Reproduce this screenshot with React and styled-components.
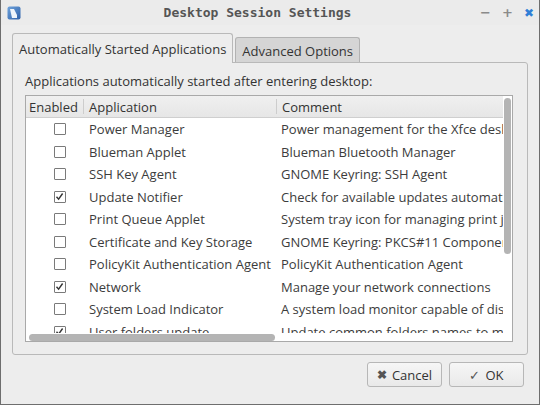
import React from 'react'
import styled, { createGlobalStyle } from 'styled-components'

const Global = createGlobalStyle`
  html, body { margin: 0; padding: 0; background: #ededed; }
  * { box-sizing: border-box; }
`

const Window = styled.div`
  width: 540px;
  height: 405px;
  background: #ededed;
  border: 1px solid #6e6e6e;
  border-top: none;
  display: flex;
  flex-direction: column;
  font-family: "Open Sans", "Noto Sans", sans-serif;
  font-size: 13px;
  color: #3c3c3c;
  overflow: hidden;
`

const TitleBar = styled.div`
  height: 25px;
  display: flex;
  align-items: center;
  padding: 0 5px 0 6px;
  background: #ebebeb;
`

const Title = styled.div`
  flex: 1;
  text-align: center;
  font-family: "DejaVu Sans Mono", monospace;
  font-weight: bold;
  font-size: 13px;
  color: #555;
  padding-left: 14px;
`

const Controls = styled.div`
  display: flex;
  gap: 12px;
  align-items: center;
`

const Ctl = styled.span`
  font-family: "DejaVu Sans", sans-serif;
  font-weight: bold;
  font-size: ${p => p.$size || 13}px;
  color: ${p => p.$color || '#8a8a8a'};
  width: 10px;
  text-align: center;
`

const Body = styled.div`
  flex: 1;
  display: flex;
  flex-direction: column;
  padding: 8px 11px 0 11px;
`

const Tabs = styled.div`
  display: flex;
  align-items: flex-end;
  height: 29px;
`

const Tab = styled.div`
  height: ${p => (p.$active ? 30 : 25)}px;
  padding: 0 6px;
  padding-top: ${p => (p.$active ? 0 : 2)}px;
  margin-right: 2px;
  display: flex;
  align-items: center;
  background: ${p => (p.$active ? '#ededed' : '#d5d5d5')};
  border: 1px solid ${p => (p.$active ? '#b9b9b9' : '#b2b2b2')};
  border-bottom: none;
  border-radius: 3px 3px 0 0;
  position: relative;
  z-index: ${p => (p.$active ? 2 : 1)};
  margin-bottom: ${p => (p.$active ? -1 : 0)}px;
  color: #333;
`

const Panel = styled.div`
  height: 293px;
  border: 1px solid #b9b9b9;
  border-radius: 0 3px 3px 3px;
  padding: 9px 14px 12px 12px;
  display: flex;
  flex-direction: column;
`

const Caption = styled.div`
  height: 20px;
  line-height: 18px;
  color: #333;
  margin-bottom: 3px;
`

const Frame = styled.div`
  flex: 1;
  border: 1px solid #a9a9a9;
  background: #fff;
  display: flex;
  overflow: hidden;
`

const Main = styled.div`
  flex: 1;
  display: flex;
  flex-direction: column;
  min-width: 0;
`

const Header = styled.div`
  height: 22px;
  display: flex;
  background: linear-gradient(#f0f0f0, #e6e6e6);
  border-bottom: 1px solid #cfcfcf;
  flex-shrink: 0;
`

const HeadCell = styled.div`
  width: ${p => (p.$w ? p.$w + 'px' : 'auto')};
  flex: ${p => (p.$w ? 'none' : 1)};
  padding-left: ${p => p.$pad || 5}px;
  display: flex;
  align-items: center;
  color: #333;
  border-left: ${p => (p.$sep ? '1px solid #cdcdcd' : 'none')};
  margin: ${p => (p.$sep ? '3px 0' : '0')};
  white-space: nowrap;
`

const Rows = styled.div`
  height: 215px;
  overflow: hidden;
  flex-shrink: 0;
`

const Row = styled.div`
  height: 22.5px;
  display: flex;
  align-items: center;
  white-space: nowrap;
`

const CheckCell = styled.div`
  width: 57px;
  flex: none;
  display: flex;
  justify-content: center;
  padding-left: 12px;
  padding-right: 2px;
`

const Box = styled.div`
  width: 12px;
  height: 12px;
  border: 1px solid #7a7a7a;
  border-radius: 1px;
  background: #fff;
  display: flex;
  align-items: center;
  justify-content: center;
`

const AppCell = styled.div`
  width: 193px;
  flex: none;
  padding-left: 6px;
  overflow: hidden;
`

const CommentCell = styled.div`
  flex: 1;
  padding-left: 5px;
  overflow: hidden;
`

const HScroll = styled.div`
  height: 9px;
  padding: 1px 0 1px 3px;
  flex-shrink: 0;
  background: #fff;
`

const HThumb = styled.div`
  width: 246px;
  height: 7px;
  border-radius: 4px;
  background: #b4b4b4;
`

const VScroll = styled.div`
  width: 9px;
  flex: none;
  padding: 2px 1px;
  background: #fff;
`

const VThumb = styled.div`
  height: 156px;
  border-radius: 4px;
  background: #b4b4b4;
`

const Footer = styled.div`
  display: flex;
  justify-content: flex-end;
  gap: 7px;
  padding: 7px 4px 0 0;
`

const Button = styled.button`
  width: 75px;
  height: 25px;
  border: 1px solid #b7b7b7;
  border-radius: 3px;
  background: linear-gradient(#f6f6f6, #e9e9e9);
  font-family: "Open Sans", "Noto Sans", sans-serif;
  font-size: 13px;
  color: #333;
  display: flex;
  align-items: center;
  justify-content: center;
  gap: 5px;
  padding: 0;
`

const BtnGlyph = styled.span`
  color: #555;
  font-weight: ${p => (p.$bold ? 'bold' : 'normal')};
  font-size: ${p => p.$size || 13}px;
`

const AppIcon = () => (
  <svg width="14" height="14" viewBox="0 0 14 14">
    <defs>
      <linearGradient id="ig" x1="0" y1="0" x2="1" y2="1">
        <stop offset="0" stopColor="#6fa3dc" />
        <stop offset="1" stopColor="#2d5fa8" />
      </linearGradient>
    </defs>
    <rect x="0.5" y="0.5" width="13" height="13" rx="2" fill="url(#ig)" />
    <path d="M3 3 L7 3 L10 9 L10 12 L5 12 Z" fill="#eef4fb" />
  </svg>
)

const Check = () => (
  <svg width="9" height="9" viewBox="0 0 9 9">
    <path d="M1.5 4.8 L3.6 7.2 L7.6 1.5" fill="none" stroke="#333" strokeWidth="1.4" />
  </svg>
)

const apps = [
  ['Power Manager', 'Power management for the Xfce desktop', false],
  ['Blueman Applet', 'Blueman Bluetooth Manager', false],
  ['SSH Key Agent', 'GNOME Keyring: SSH Agent', false],
  ['Update Notifier', 'Check for available updates automatically', true],
  ['Print Queue Applet', 'System tray icon for managing print jobs', false],
  ['Certificate and Key Storage', 'GNOME Keyring: PKCS#11 Component', false],
  ['PolicyKit Authentication Agent', 'PolicyKit Authentication Agent', false],
  ['Network', 'Manage your network connections', true],
  ['System Load Indicator', 'A system load monitor capable of displaying graphs', false],
  ['User folders update', 'Update common folders names to match current locale', true],
]

export default function App() {
  return (
    <>
      <Global />
      <Window>
        <TitleBar>
          <AppIcon />
          <Title>Desktop Session Settings</Title>
          <Controls>
            <Ctl>−</Ctl>
            <Ctl>+</Ctl>
            <Ctl $color="#2f7fd6" $size={12}>✖</Ctl>
          </Controls>
        </TitleBar>
        <Body>
          <Tabs>
            <Tab $active>Automatically Started Applications</Tab>
            <Tab>Advanced Options</Tab>
          </Tabs>
          <Panel>
            <Caption>Applications automatically started after entering desktop:</Caption>
            <Frame>
              <Main>
                <Header>
                  <HeadCell $w={57} $pad={3}>Enabled</HeadCell>
                  <HeadCell $w={193} $sep>Application</HeadCell>
                  <HeadCell $sep>Comment</HeadCell>
                </Header>
                <Rows>
                  {apps.map(([name, comment, on]) => (
                    <Row key={name}>
                      <CheckCell>
                        <Box>{on && <Check />}</Box>
                      </CheckCell>
                      <AppCell>{name}</AppCell>
                      <CommentCell>{comment}</CommentCell>
                    </Row>
                  ))}
                </Rows>
                <HScroll>
                  <HThumb />
                </HScroll>
              </Main>
              <VScroll>
                <VThumb />
              </VScroll>
            </Frame>
          </Panel>
          <Footer>
            <Button>
              <BtnGlyph $bold $size={12}>✖</BtnGlyph>Cancel
            </Button>
            <Button>
              <BtnGlyph>✓</BtnGlyph>OK
            </Button>
          </Footer>
        </Body>
      </Window>
    </>
  )
}
